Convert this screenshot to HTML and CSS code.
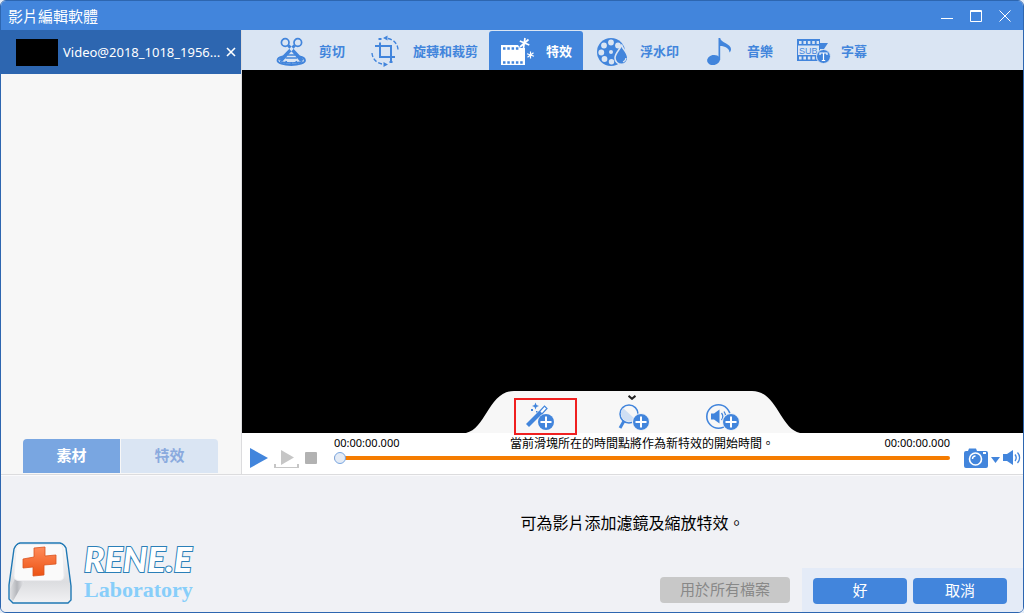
FILE: index.html
```
<!DOCTYPE html>
<html lang="zh-Hant">
<head>
<meta charset="utf-8">
<title>影片編輯軟體</title>
<link rel="stylesheet" href="styles.css">
</head>
<body>
<div class="window">
  <header class="titlebar">
    <h1 class="title">影片編輯軟體</h1>
    <div class="window-controls">
      <button class="window-button" type="button" aria-label="最小化"><svg width="12" height="12" viewBox="0 0 12 12"><path d="M0 8.5h12" stroke="#fff"/></svg></button>
      <button class="window-button" type="button" aria-label="最大化"><svg width="12" height="12" viewBox="0 0 12 12" fill="none" stroke="#fff"><path d="M.5.5h11v11H.5zM0 1.5h12"/></svg></button>
      <button class="window-button" type="button" aria-label="關閉"><svg width="12" height="12" viewBox="0 0 12 12"><path d="M.5.5l11 11M11.5.5l-11 11" stroke="#fff"/></svg></button>
    </div>
  </header>

  <div class="workspace">
    <aside class="sidebar">
      <div class="file">
        <span class="file-thumb"></span>
        <span class="file-name">Video@2018_1018_1956...</span>
        <button class="file-close" type="button" aria-label="移除"><svg width="10" height="10" viewBox="0 0 10 10"><path d="M1 1l8 8M9 1L1 9" stroke="#fff" stroke-width="1.6"/></svg></button>
      </div>
      <div class="side-tabs">
        <button class="side-tab side-tab-active" type="button">素材</button>
        <button class="side-tab" type="button">特效</button>
      </div>
    </aside>

    <main class="editor">
      <nav class="toolbar">
        <button class="tool" type="button">
          <svg class="tool-icon" viewBox="0 0 36 32" fill="none" stroke="#4285dc">
            <path d="M10 21.500c-4 .8-5.500 2.500-5.500 4 0 2.500 6 4.500 13.700 4.500S32 28 32 25.500c0-1.500-1.500-3.200-5.500-4" stroke-width="1.800"/>
            <path d="M7 26.500c5 2 17.500 2 22.500 0M12 29l1.500-3M18.200 30v-3M24.500 29L23 26" stroke-width="1.400"/>
            <path d="M14.500 20h7.500M12.500 23h11.500" stroke-width="1.500"/>
            <circle cx="12.200" cy="7.500" r="3.800" stroke-width="1.700"/><circle cx="24.800" cy="7.500" r="3.800" stroke-width="1.700"/>
            <path d="M14 11l2.500-1.500L31 25l-4 1.500zM23 11l-2.500-1.500L5.500 25l4 1.500z" fill="#4285dc" stroke="none"/>
            <circle cx="18.400" cy="14.500" r="1" fill="#dae5f3" stroke="none"/>
          </svg>剪切</button>
        <button class="tool" type="button">
          <svg class="tool-icon" viewBox="0 0 36 32" fill="none" stroke="#4285dc">
            <path d="M13 7.500v14.500H28M8 11h16v16" stroke-width="2"/>
            <path d="M21 3.500c5.500 1 9.500 5 10 11M15 29C9.500 28 5.500 24 5 18" stroke-width="1.400" stroke-dasharray="4 2"/>
            <path d="M16 3l4.500-2.500v5zM21 29.500L16.500 27v5z" fill="#4285dc" stroke="none"/>
            <path d="M11.500 4h3M22.500 27h3" stroke-width="2"/>
          </svg>旋轉和裁剪</button>
        <button class="tool tool-active" type="button">
          <svg class="tool-icon" viewBox="0 0 36 32">
            <path d="M1 10h17l2 3h5v17H1z" fill="#fff"/>
            <path d="M3 13.500h17M3 27.500h21" stroke="#4285dc" stroke-width="2.600" stroke-dasharray="2.500 1.800"/>
            <path d="M25 3l-1.500 10M19.800 6l9.500 4M28.500 4.500L20 12" stroke="#fff" stroke-width="1.700"/>
            <path d="M30.500 16.500v7M27 18.700l7 2.600M33.500 17.700l-6 4.600" stroke="#fff" stroke-width="1.200"/>
          </svg>特效</button>
        <button class="tool" type="button">
          <svg class="tool-icon" viewBox="0 0 36 32">
            <circle cx="17" cy="17" r="14" fill="#4285dc"/>
            <g fill="#dae5f3"><circle cx="17" cy="17" r="2"/><circle cx="17" cy="7.500" r="2.900"/><circle cx="24" cy="10.500" r="2.900"/><circle cx="10" cy="10.500" r="2.900"/><circle cx="7.300" cy="17.500" r="2.900"/><circle cx="10.500" cy="24" r="2.900"/><circle cx="17.500" cy="26.700" r="2.700"/></g>
            <path d="M27.500 9.500c1 5 6.300 8 6.300 13.500a6.400 6.400 0 0 1-12.800 0c0-5.500 5.500-8.500 6.500-13.500z" fill="#4285dc" stroke="#dae5f3" stroke-width="1.600"/>
            <path d="M29 27c1.800-.8 2.800-2 3-4" fill="none" stroke="#dae5f3" stroke-width="1.300"/>
          </svg>浮水印</button>
        <button class="tool" type="button">
          <svg class="tool-icon" viewBox="0 0 36 32" fill="#4285dc">
            <ellipse cx="12.500" cy="25" rx="6.500" ry="5" transform="rotate(-12 12.500 25)"/>
            <path d="M17.500 3h1.700c.5 5 10.800 5.500 10.800 11 0 1.500-.5 2.500-1.500 3.500 0-4-4.500-6.500-9.300-6.500v14h-1.700z"/>
          </svg>音樂</button>
        <button class="tool" type="button">
          <svg class="tool-icon" viewBox="0 0 36 32">
            <path d="M2 4h23v22H2z" fill="#4285dc"/>
            <path d="M4 7.500h20M4 23h20" stroke="#dae5f3" stroke-width="3" stroke-dasharray="2.600 1.800"/>
            <path d="M3 10.500h21v9.500H3z" fill="#dae5f3"/>
            <text class="sub-text" x="4" y="18.600">SUB</text>
            <path d="M25 8h8l-4 6h-4z" fill="#4285dc"/>
            <circle cx="28.500" cy="21.500" r="7" fill="#4285dc" stroke="#dae5f3"/>
            <path d="M25 20v-2h7v2M28.500 18v7.500M26.800 25.500h3.400" stroke="#fff" stroke-width="1.200" fill="none"/>
          </svg>字幕</button>
      </nav>

      <section class="video">
        <div class="tray">
          <svg class="tray-shape" viewBox="0 0 334 42" preserveAspectRatio="none"><path d="M0 42C20 38 23 0 48 0h238c25 0 28 38 48 42z" fill="#f7f7f7"/></svg>
          <svg class="tray-chevron" viewBox="0 0 8 5"><path d="M.5.800L4 3.800 7.500.800" fill="none" stroke="#222" stroke-width="2"/></svg>
          <div class="tray-buttons">
            <button class="tray-button tray-button-marked" type="button" aria-label="添加濾鏡">
              <svg width="40" height="32" viewBox="0 0 40 32">
                <path d="M1 23L14 10l3 3L4 26z" fill="#4285dc"/>
                <path d="M14.500 10.500l5-5.500 2.500 2.500-5 5.500z" fill="#fff" stroke="#4285dc" stroke-width="1.200"/>
                <path d="M10.500 1.500l1 2.500 2.500 1-2.500 1-1 2.500-1-2.500-2.500-1 2.500-1z" fill="#4285dc"/>
                <path d="M6 8h2v2H6zM11 10h1.500v1.500H11z" fill="#4285dc"/>
                <circle cx="21" cy="21" r="8" fill="#4285dc"/><path d="M15.500 21h11M21 15.500v11" stroke="#fff" stroke-width="2"/>
              </svg></button>
            <button class="tray-button" type="button" aria-label="添加縮放">
              <svg width="40" height="32" viewBox="0 0 40 32">
                <circle cx="15" cy="13" r="9" fill="#f7f7f7" stroke="#4285dc" stroke-width="1.500"/>
                <path d="M9 7a8 8 0 0 0 12 11z" fill="#cfdff4"/>
                <path d="M10 20l-4 7" stroke="#4285dc" stroke-width="3"/>
                <circle cx="27" cy="21" r="8.500" fill="#4285dc" stroke="#f7f7f7"/><path d="M21.500 21h11M27 15.500v11" stroke="#fff" stroke-width="2"/>
              </svg></button>
            <button class="tray-button" type="button" aria-label="添加音效">
              <svg width="40" height="32" viewBox="0 0 40 32">
                <circle cx="15.500" cy="15.500" r="11.700" fill="none" stroke="#4285dc" stroke-width="1.600"/>
                <path d="M8 12.500h3l5.500-4v14l-5.500-4H8z" fill="#4285dc"/>
                <path d="M18.500 12c1.500 2 1.500 5 0 7M21 10.500c2 3 2 7 0 10" stroke="#4285dc" stroke-width="1.300" fill="none"/>
                <circle cx="28" cy="21" r="8.500" fill="#4285dc" stroke="#f7f7f7"/><path d="M22.500 21h11M28 15.500v11" stroke="#fff" stroke-width="2"/>
              </svg></button>
          </div>
        </div>
      </section>

      <section class="player">
        <div class="transport">
          <button class="icon-button" type="button" aria-label="播放"><svg width="18" height="20" viewBox="0 0 18 20"><path d="M0 0l18 10L0 20z" fill="#4285dc"/></svg></button>
          <button class="icon-button" type="button" aria-label="播放片段"><svg width="25" height="20" viewBox="0 0 25 20"><path d="M7 2l13 7.500L7 17z" fill="#c6c6c6"/><path d="M1 16v4M24 16v4M0 20h25" fill="none" stroke="#c6c6c6" stroke-width="2"/></svg></button>
          <button class="icon-button" type="button" aria-label="停止"><svg width="12" height="20" viewBox="0 0 12 20"><rect y="4" width="12" height="12" rx="1" fill="#b2b2b2"/></svg></button>
        </div>
        <div class="timeline">
          <div class="times">
            <span class="time">00:00:00.000</span>
            <label class="hint" for="seek">當前滑塊所在的時間點將作為新特效的開始時間。</label>
            <span class="time">00:00:00.000</span>
          </div>
          <input class="seek" id="seek" type="range" min="0" max="100" value="0">
        </div>
        <div class="output">
          <button class="icon-button" type="button" aria-label="截圖"><svg width="24" height="20" viewBox="0 0 24 20"><path d="M2 3h2l1-2.500h7L13 3h9q2 0 2 2v13q0 2-2 2H2q-2 0-2-2V5q0-2 2-2z" fill="#4285dc"/><circle cx="11.500" cy="11" r="6" fill="#4285dc" stroke="#fff" stroke-width="1.600"/><path d="M8.500 11a3 3 0 0 1 3-3" fill="none" stroke="#fff" stroke-width="1.400"/><path d="M19 4h3v2h-3z" fill="#fff"/></svg></button>
          <button class="icon-button" type="button" aria-label="截圖選項"><svg width="9" height="20" viewBox="0 0 9 20"><path d="M0 9h9l-4.500 6z" fill="#4285dc"/></svg></button>
          <button class="icon-button" type="button" aria-label="音量"><svg width="18" height="20" viewBox="0 0 18 20"><path d="M0 6h4l6-4v15l-6-4H0z" fill="#4285dc"/><path d="M12 6.500c1.500 2 1.500 4.500 0 6.500M14.500 4.500c2.800 3 2.800 7.500 0 10.500" fill="none" stroke="#4285dc" stroke-width="1.300"/></svg></button>
        </div>
      </section>
    </main>
  </div>

  <footer class="footer">
    <div class="brand">
      <svg class="brand-key" viewBox="0 0 64 62">
        <defs>
          <linearGradient id="side" x1="0" y1="0" x2="0" y2="1"><stop offset="0" stop-color="#fff"/><stop offset=".65" stop-color="#dcdde0"/><stop offset="1" stop-color="#f2f2f4"/></linearGradient>
          <linearGradient id="shade" x1="0" y1="0" x2="1" y2="0"><stop offset="0" stop-color="#dfe0e3"/><stop offset=".5" stop-color="#b4b6bb"/><stop offset="1" stop-color="#e6e6e9"/></linearGradient>
          <linearGradient id="cross" x1="0" y1="0" x2="0" y2="1"><stop offset="0" stop-color="#ff8c5c"/><stop offset="1" stop-color="#ec5212"/></linearGradient>
        </defs>
        <path d="M12 1h40q4 1 6 5l5 38v14l-3 3H5l-4-4V43L6 7q2-5 6-6z" fill="url(#side)" stroke="#1f78b4" stroke-width="1.400"/>
        <path d="M7 37l-5 10v9l3 3 11-19z" fill="url(#shade)"/>
        <path d="M12 2.500h40q3 0 3 4l1 27q0 5-5 5H11q-5 0-5-5l2-27q1-4 4-4z" fill="#fafafa" stroke="#ededf0"/>
        <path d="M26 6l11-1v9l11-1v9l-12 1v10l-11 1V25l-10 1v-9l11-2z" fill="url(#cross)" stroke="#d9531e" stroke-width=".8"/>
      </svg>
      <div class="brand-text">
        <span class="brand-name">RENE.E</span>
        <span class="brand-sub">Laboratory</span>
      </div>
    </div>
    <div class="footer-main">
      <p class="message">可為影片添加濾鏡及縮放特效。</p>
      <div class="actions">
        <button class="button button-wide" type="button" disabled>用於所有檔案</button>
        <div class="confirm">
          <button class="button" type="button">好</button>
          <button class="button" type="button">取消</button>
        </div>
      </div>
    </div>
  </footer>
</div>
</body>
</html>
```
FILE: styles.css
```
* { box-sizing: border-box; }

body {
  margin: 0;
  background: #e4ecf7;
  font-family: "Noto Sans", "Noto Sans CJK TC", sans-serif;
  font-size: 12px;
  color: #000;
}

button {
  margin: 0;
  padding: 0;
  border: 0;
  background: none;
  font-family: inherit;
  color: inherit;
}

svg { display: block; }

.window {
  display: flex;
  flex-direction: column;
  min-height: 100vh;
  overflow: hidden;
  border: 1px solid #2d66b0;
  border-radius: 6px;
  background: #f0f1f5;
}

.titlebar {
  display: flex;
  align-items: center;
  justify-content: space-between;
  height: 29px;
  padding: 0 12px 0 7px;
  background: #4285dc;
  color: #fff;
}

.title {
  margin: 0;
  font-size: 15px;
  font-weight: 400;
  line-height: 24px;
}

.window-controls { display: flex; gap: 17px; }
.window-button { height: 12px; }

.workspace {
  display: flex;
  flex: 1;
  border-bottom: 1px solid #dcdcde;
}

.sidebar {
  display: flex;
  flex: 0 0 241px;
  flex-direction: column;
  justify-content: space-between;
  border-right: 1px solid #dcdcde;
  background: #f7f7f7;
}

.file {
  display: flex;
  align-items: center;
  gap: 5px;
  height: 44px;
  padding: 0 5px 0 15px;
  background: #2d66b0;
  color: #fff;
}

.file-thumb { width: 42px; height: 27px; background: #000; }
.file-name { flex: 1; font-size: 13px; white-space: nowrap; }

.side-tabs { display: flex; gap: 1px; padding: 0 23px 1px 22px; }

.side-tab {
  flex: 1;
  height: 34px;
  padding-bottom: 4px;
  border-radius: 0 4px 0 0;
  background: #dae5f3;
  color: #8aaade;
  font-size: 15px;
  font-weight: 700;
}

.side-tab-active {
  border-radius: 4px 0 0;
  background: #79a6e1;
  color: #fff;
}

.editor { display: flex; flex: 1; flex-direction: column; min-width: 0; }

.toolbar {
  display: flex;
  height: 40px;
  padding: 1px 20px 0;
  background: #dae5f3;
}

.tool {
  display: flex;
  align-items: center;
  gap: 10px;
  padding: 0 11px;
  border-radius: 3px 3px 0 0;
  color: #4285dc;
  font-size: 13px;
  font-weight: 700;
  white-space: nowrap;
}

.tool-active { background: #4285dc; color: #fff; }
.tool-icon { width: 36px; height: 32px; }
.sub-text { font: 9px "Liberation Sans", sans-serif; fill: #4285dc; }

.video {
  position: relative;
  flex: 1;
  min-height: 120px;
  background: #000;
}

/* Effect tray rises over the lower edge of the video */
.tray {
  position: absolute;
  bottom: 0;
  left: 50%;
  width: 334px;
  height: 42px;
  margin-left: -167px;
}

.tray-shape { width: 100%; height: 100%; }
.tray-chevron { position: absolute; top: 4px; left: 162px; width: 8px; height: 5px; }

.tray-buttons {
  position: absolute;
  top: 7px;
  left: 0;
  display: flex;
  justify-content: center;
  gap: 26px;
  width: 100%;
  padding-left: 3px;
}

.tray-button {
  display: flex;
  align-items: center;
  justify-content: center;
  width: 63px;
  height: 37px;
}

.tray-button-marked { border: 2px solid #f02020; }

.player {
  display: flex;
  gap: 14px;
  height: 41px;
  padding: 0 2px 0 8px;
  background: #fff;
}

.transport, .output { display: flex; padding-top: 15px; }
.transport { gap: 6px; padding-right: 3px; }
.output { gap: 3px; }
.icon-button { height: 20px; }
.timeline { flex: 1; }

.times {
  display: flex;
  align-items: center;
  justify-content: space-between;
  height: 19px;
  white-space: nowrap;
}

.time { font-size: 11px; }
.hint { font-size: 12px; }

.seek {
  display: block;
  width: 100%;
  height: 12px;
  margin: 0;
  appearance: none;
  background: transparent;
}

.seek::-webkit-slider-runnable-track { height: 4px; border-radius: 2px; background: #f57c00; }

.seek::-webkit-slider-thumb {
  width: 12px;
  height: 12px;
  margin-top: -4px;
  appearance: none;
  border: 1px solid #79a6e1;
  border-radius: 50%;
  background: #e4ebf5;
}

.footer {
  display: flex;
  height: 137px;
  border-top: 1px solid #fafafc;
  background: #f0f1f5;
}

.brand {
  display: flex;
  flex: 0 0 241px;
  align-items: flex-end;
  gap: 12px;
  padding: 0 0 8px 7px;
}

.brand-key { width: 64px; height: 62px; }
.brand-text { display: flex; flex-direction: column; }

.brand-name {
  color: #fff;
  font-family: Lato, sans-serif;
  font-size: 34px;
  font-style: italic;
  font-weight: 900;
  line-height: 34px;
  paint-order: stroke fill;
  -webkit-text-stroke: 2px #2a7fb8;
}

.brand-sub {
  color: #87cefa;
  font-family: "Liberation Serif", serif;
  font-size: 22px;
  font-weight: 700;
  line-height: 28px;
}

.footer-main { display: flex; flex: 1; flex-direction: column; }

.message {
  flex: 1;
  margin: 0;
  padding: 35px 0 0;
  font-size: 16px;
  line-height: 24px;
  text-align: center;
}

.actions {
  display: flex;
  align-items: center;
  justify-content: flex-end;
  gap: 12px;
}

.confirm {
  display: flex;
  gap: 6px;
  padding: 10px 16px 8px 11px;
  background: #e4ebf7;
}

.button {
  width: 94px;
  height: 26px;
  padding-bottom: 2px;
  border-radius: 4px;
  background: #4285dc;
  color: #fff;
  font-size: 15px;
  line-height: 24px;
}

.button-wide { width: 130px; }
.button:disabled { background: #c8c8c8; color: #888; }
```
